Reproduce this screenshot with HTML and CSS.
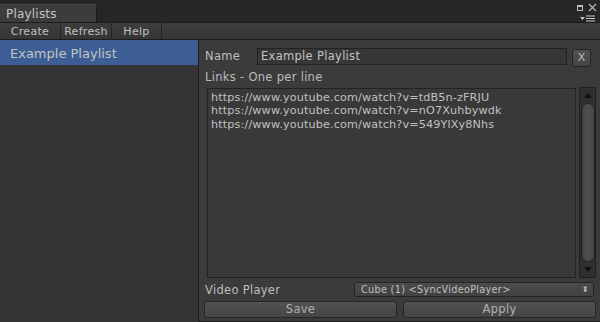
FILE: index.html
```html
<!DOCTYPE html>
<html>
<head>
<meta charset="utf-8">
<link rel="stylesheet" href="styles.css">
</head>
<body>
<div class="window">
  <div class="titlebar">
    <div class="tab">Playlists</div>
    <div class="win-ctrls">
      <div class="ctrl-top">
        <span class="maxbox"></span>
        <svg class="closex" width="9" height="9" viewBox="0 0 9 9"><path d="M1 1L8 8M8 1L1 8" stroke="#b5b5b5" stroke-width="1.2"/></svg>
      </div>
      <svg class="menuicon" width="17" height="7" viewBox="0 0 17 7"><path d="M0 2h5l-2.5 3z" fill="#c8c8c8"/><path d="M6 1h9M6 3.5h9M6 6h9" stroke="#c8c8c8" stroke-width="1.2"/></svg>
    </div>
  </div>
  <div class="toolbar">
    <div class="tbtn w-create">Create</div>
    <div class="tbtn w-refresh">Refresh</div>
    <div class="tbtn w-help">Help</div>
  </div>
  <div class="main">
    <div class="sidebar">
      <div class="item selected">Example Playlist</div>
    </div>
    <div class="content">
      <div class="row name-row">
        <span class="label name-label">Name</span>
        <div class="field">Example Playlist</div>
        <div class="xbtn">X</div>
      </div>
      <div class="label links-label">Links - One per line</div>
      <div class="links-row">
        <div class="textarea">
          <div>https://www.youtube.com/watch?v=tdB5n-zFRJU</div>
          <div>https://www.youtube.com/watch?v=nO7Xuhbywdk</div>
          <div>https://www.youtube.com/watch?v=549YlXy8Nhs</div>
        </div>
        <div class="scrollbar">
          <div class="arrow up"></div>
          <div class="thumb"></div>
          <div class="arrow down"></div>
        </div>
      </div>
      <div class="row vp-row">
        <span class="label vp-label">Video Player</span>
        <div class="dropdown"><span>Cube (1) &lt;SyncVideoPlayer&gt;</span><span class="updown">&#x2B0D;</span></div>
      </div>
      <div class="row btn-row">
        <div class="btn">Save</div>
        <div class="btn">Apply</div>
      </div>
    </div>
  </div>
</div>
</body>
</html>
```
FILE: styles.css
```css
* { box-sizing: border-box; }
html, body { margin: 0; padding: 0; }
body {
  width: 600px; height: 322px; overflow: hidden;
  background: #383838;
  font-family: "DejaVu Sans", sans-serif;
  font-size: 11px;
  color: #bcbcbc;
}
.window { display: flex; flex-direction: column; height: 322px; }
.titlebar {
  height: 22px; background: #262626;
  display: flex; align-items: flex-end; justify-content: space-between;
  position: relative;
}
.tab {
  width: 97px; height: 18px;
  background: #3c3c3c;
  border-top: 1px solid #4a4a4a;
  border-right: 1px solid #1a1a1a;
  border-top-right-radius: 3px;
  padding-left: 6px; line-height: 18px;
  font-size: 12px; color: #c4c4c4; letter-spacing: 0.2px;
}
.win-ctrls {
  display: flex; flex-direction: column; align-items: flex-end;
  padding-right: 3px; gap: 4px; align-self: flex-start; padding-top: 3px;
}
.ctrl-top { display: flex; align-items: center; gap: 5px; }
.maxbox { width: 6px; height: 6px; border: 1.5px solid #bdbdbd; border-top-width: 2px; display: block; }
.closex { display: block; }
.menuicon { display: block; margin-top: -1px; }
.toolbar {
  height: 18px; display: flex;
  background: linear-gradient(#3d3d3d, #353535);
  border-top: 1px solid #1c1c1c;
  border-bottom: 1px solid #1c1c1c;
}
.tbtn {
  line-height: 17px; text-align: center;
  border-right: 1px solid #242424;
  font-size: 11px; color: #c0c0c0; letter-spacing: 0.3px;
}
.w-create { width: 61px; }
.w-refresh { width: 51px; }
.w-help { width: 50px; }
.main { flex: 1; display: flex; min-height: 0; }
.sidebar { width: 200px; background: #343434; border-right: 1px solid #1e1e1e; }
.item {
  height: 25px; line-height: 27px; padding-left: 10px;
  font-size: 13px; color: #c2c2c2;
}
.item.selected { background: #3d5e94; }
.content {
  flex: 1; display: flex; flex-direction: column;
  padding: 7px 4px 4px 5px;
  background: #3b3b3b;
  border-bottom: 1px solid #1e1e1e;
}
.row { display: flex; align-items: center; }
.label { color: #bdbdbd; font-size: 11.5px; letter-spacing: 0.3px; }
.name-row { height: 18px; }
.name-label { width: 53px; padding-left: 1px; }
.field {
  width: 310px; height: 17px;
  background: #373737; border: 1px solid #222;
  padding-left: 3px; line-height: 15px; font-size: 11.5px; color: #c2c2c2;
  letter-spacing: 0.3px;
}
.xbtn {
  width: 19px; height: 18px; margin-left: 5px; margin-top: 4px;
  background: linear-gradient(#525252, #444);
  border: 1px solid #222; border-radius: 3px;
  text-align: center; line-height: 16px; color: #b8b8b8; font-size: 11px;
}
.links-label { margin-top: 5px; height: 15px; line-height: 15px; padding-left: 1px; }
.links-row { display: flex; margin-top: 2px; height: 191px; }
.textarea {
  width: 369px; margin-left: 3px; height: 190px; margin-top: 1px;
  background: #393939; border: 1px solid #232323;
  padding: 2px 3px; font-size: 11.2px; line-height: 13.3px; color: #c0c0c0;
  letter-spacing: 0.15px;
}
.scrollbar {
  width: 17px; margin-left: 3px; height: 191px;
  background: #2f2f2f; border: 1px solid #1f1f1f;
  display: flex; flex-direction: column; align-items: center;
}
.arrow { width: 0; height: 0; border-left: 4px solid transparent; border-right: 4px solid transparent; margin: 5px 0; }
.arrow.up { border-bottom: 5px solid #111; }
.arrow.down { border-top: 5px solid #111; }
.thumb {
  flex: 1; width: 14px; border-radius: 7px;
  background: linear-gradient(90deg, #3f3f3f, #4e4e4e 40%, #474747);
  border: 1px solid #222;
}
.vp-row { margin-top: 4px; height: 15px; }
.vp-label { width: 150px; padding-left: 1px; padding-top: 1px; }
.dropdown {
  width: 240px; height: 15px;
  background: linear-gradient(#4c4c4c, #414141);
  border: 1px solid #242424; border-radius: 3px;
  display: flex; justify-content: space-between; align-items: center;
  padding: 0 4px 0 6px; font-size: 9.7px; color: #c0c0c0; letter-spacing: 0.3px;
}
.updown { font-size: 8px; color: #bbb; }
.btn-row { margin-top: 4px; gap: 6px; }
.btn {
  flex: 1; height: 17px;
  background: linear-gradient(#525252, #454545);
  border: 1px solid #252525; border-radius: 3px;
  text-align: center; line-height: 15px; font-size: 11.5px; color: #b0b0b0; letter-spacing: 0.3px;
}
```
